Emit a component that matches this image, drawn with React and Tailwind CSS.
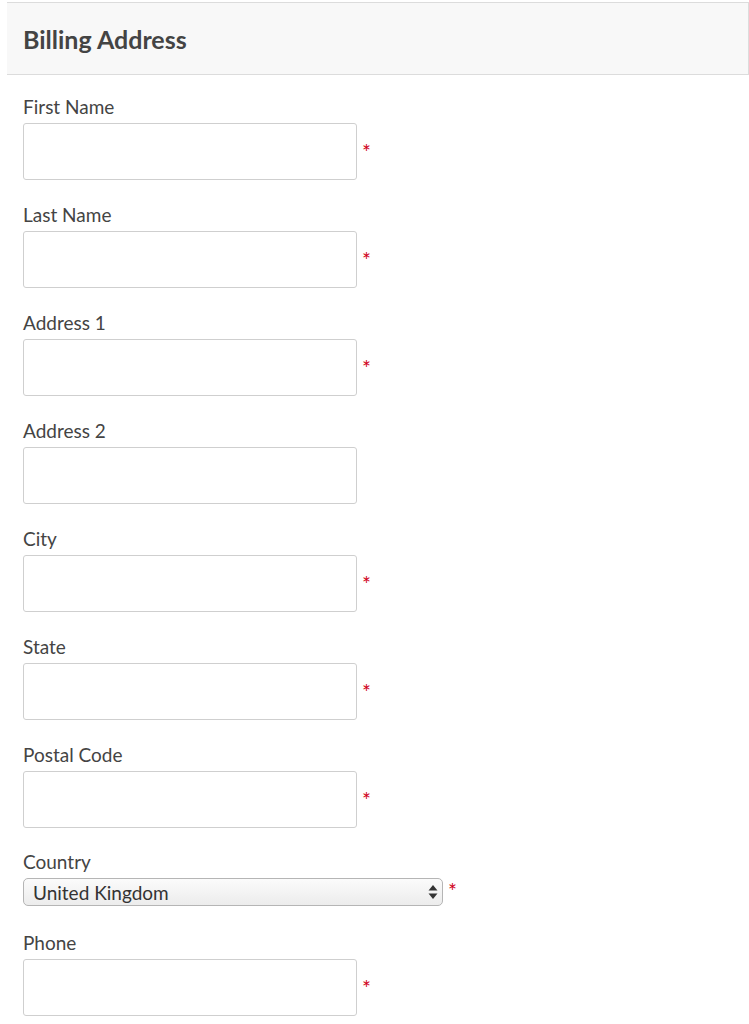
import React from "react";

const font = { fontFamily: "Lato, 'Open Sans', sans-serif" };

function Star({ className = "" }) {
  return <span className={"text-[#d0021b] text-[21px] leading-none ml-[5px] " + className}>*</span>;
}

function Field({ label, required = true }) {
  return (
    <div className="mb-[24px]">
      <div className="text-[19px] leading-[22px] text-[#444]">{label}</div>
      <div className="flex items-center mt-[5px]">
        <div className="w-[334px] h-[57px] border border-[#cfcfcf] rounded-[3px] bg-white" />
        {required && <Star />}
      </div>
    </div>
  );
}

export default function App() {
  return (
    <div className="w-[749px] h-[1024px] bg-white overflow-hidden" style={font}>
      <div className="mt-[2px] ml-[7px] h-[73px] bg-[#f8f8f8] border-t border-b border-r border-[#dcdcdc] flex items-center pl-[16px]">
        <h1 className="text-[25px] font-bold text-[#444] leading-none mt-[2px]">Billing Address</h1>
      </div>
      <div className="pl-[23px] pt-[21px]">
        <Field label="First Name" />
        <Field label="Last Name" />
        <Field label="Address 1" />
        <Field label="Address 2" required={false} />
        <Field label="City" />
        <Field label="State" />
        <Field label="Postal Code" />
        <div className="mb-[26px] -mt-[1px]">
          <div className="text-[19px] leading-[22px] text-[#444]">Country</div>
          <div className="flex items-start mt-[5px]">
            <div className="w-[420px] h-[28px] border border-[#b5b5b5] rounded-[5px] bg-gradient-to-b from-[#fbfbfb] to-[#ececec] flex items-center justify-between pl-[9px] pr-[4px]">
              <span className="text-[19px] text-[#333] leading-none">United Kingdom</span>
              <svg width="10" height="18" viewBox="0 0 10 18">
                <path d="M5 2 L9.5 7.5 H0.5 Z" fill="#333" />
                <path d="M5 16 L9.5 10.5 H0.5 Z" fill="#333" />
              </svg>
            </div>
            <Star className="mt-[2px] ml-[5px]" />
          </div>
        </div>
        <Field label="Phone" />
      </div>
    </div>
  );
}
